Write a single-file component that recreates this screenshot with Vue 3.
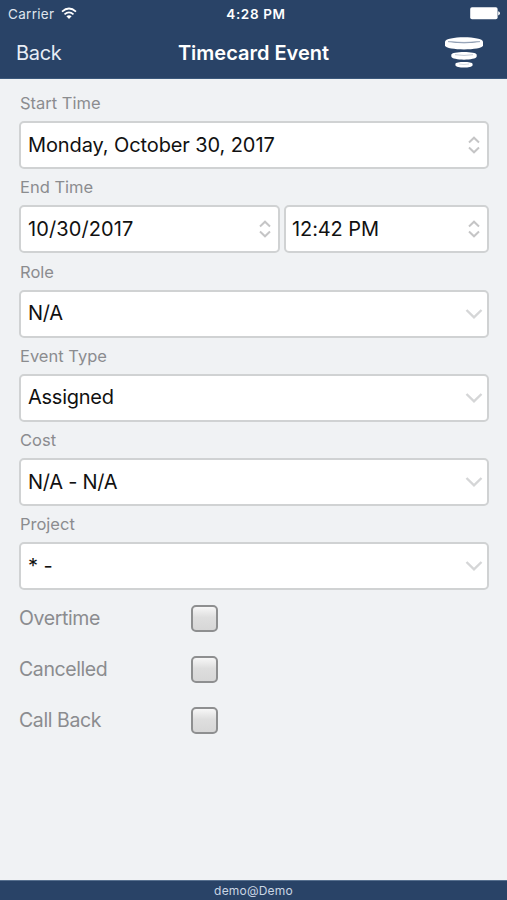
<script setup>
const groups = [
  { label: 'Start Time', fields: [{ value: 'Monday, October 30, 2017', kind: 'stepper', cls: 'date-long' }] },
  {
    label: 'End Time',
    fields: [
      { value: '10/30/2017', kind: 'stepper', cls: 'date' },
      { value: '12:42 PM', kind: 'stepper', cls: 'time' },
    ],
  },
  { label: 'Role', fields: [{ value: 'N/A', kind: 'select', cls: 'tight' }] },
  { label: 'Event Type', fields: [{ value: 'Assigned', kind: 'select', cls: 'tight' }] },
  { label: 'Cost', fields: [{ value: 'N/A - N/A', kind: 'select', cls: 'tight' }] },
  { label: 'Project', fields: [{ value: '* -', kind: 'select' }] },
]
const checks = ['Overtime', 'Cancelled', 'Call Back']
</script>

<template>
  <div class="screen">
    <header class="top">
      <div class="status">
        <div class="carrier">
          <span>Carrier</span>
          <svg width="16" height="13" viewBox="0 0 16 13">
            <g fill="none" stroke="#fff" stroke-width="1.7">
              <path d="M1 4.7 Q8 -1.7 15 4.7" />
              <path d="M3.5 7.4 Q8 3.3 12.5 7.4" />
            </g>
            <path d="M5.4 9.3 Q8 7.2 10.6 9.3 L8 12 Z" fill="#fff" />
          </svg>
        </div>
        <span class="clock">4:28 PM</span>
        <svg class="battery" width="30" height="13" viewBox="0 0 30 13">
          <rect x="0.2" y="0.3" width="27.4" height="12" rx="1.8" fill="#fff" />
          <path d="M28.2 4.2 Q30 4.8 30 6.3 Q30 7.8 28.2 8.4 Z" fill="#fff" />
        </svg>
      </div>
      <nav class="nav">
        <span class="back">Back</span>
        <h1>Timecard Event</h1>
        <svg class="logo" width="38" height="31" viewBox="0 0 38 31">
          <path d="M0 4.8 C0 -1.2 38 -1.2 38 4.8 V8.6 C37 13.8 1 13.8 0 8.6 Z" fill="#fff" />
          <path d="M3 4.6 Q19 7.6 35 4.6 Q19 6.2 3 4.6 Z" fill="#8293aa" stroke="#8293aa" stroke-width=".5" />
          <path d="M6.3 17.8 C6.3 14 31.7 14 31.7 17.8 V19.6 C31 23.8 7 23.8 6.3 19.6 Z" fill="#fff" />
          <path d="M10 17.7 Q19 19.2 28 17.7" fill="none" stroke="#b3bdca" stroke-width=".8" />
          <path d="M10.4 27 C10.4 24.4 27.6 24.4 27.6 27 V28.2 C27 31.4 11 31.4 10.4 28.2 Z" fill="#fff" />
          <path d="M14 27 Q19 28 24 27" fill="none" stroke="#c0c8d2" stroke-width=".7" />
        </svg>
      </nav>
    </header>

    <main>
      <section v-for="g in groups" :key="g.label" class="group">
        <label>{{ g.label }}</label>
        <div class="row">
          <div v-for="f in g.fields" :key="f.value" class="field" :class="f.cls">
            <span>{{ f.value }}</span>
            <svg v-if="f.kind === 'stepper'" class="stepper" width="12" height="18" viewBox="0 0 12 18">
              <path d="M1 6.4 L6 1.7 L11 6.4 M1 11.6 L6 16.3 L11 11.6" />
            </svg>
            <svg v-else class="chevron" width="18" height="12" viewBox="0 0 18 12">
              <path d="M1.5 2 L9 9.3 L16.5 2" />
            </svg>
          </div>
        </div>
      </section>
      <div class="checks">
        <div v-for="c in checks" :key="c" class="check">
          <span>{{ c }}</span>
          <i class="box"></i>
        </div>
      </div>
    </main>

    <footer>demo@Demo</footer>
  </div>
</template>

<style>
body {
  margin: 0;
  background: #f0f2f4;
}
</style>

<style scoped>
.screen {
  width: 507px;
  height: 900px;
  display: flex;
  flex-direction: column;
  background: #f0f2f4;
  font-family: Inter, Roboto, sans-serif;
  overflow: hidden;
}
.top {
  height: 79px;
  box-sizing: border-box;
  background: #294367;
  border-bottom: 1px solid #3b587b;
  color: #fff;
}
.status {
  height: 27px;
  display: grid;
  grid-template-columns: 1fr auto 1fr;
  align-items: center;
  padding: 0 7px 0 12px;
  font-size: 13.5px;
}
.carrier {
  display: flex;
  align-items: center;
  gap: 7px;
  margin-left: -4px;
  color: #dfe5ed;
  letter-spacing: 0.3px;
}
.clock {
  font-weight: 600;
  font-size: 13.5px;
  letter-spacing: 0.65px;
}
.battery {
  justify-self: end;
}
.nav {
  height: 51px;
  display: grid;
  grid-template-columns: 1fr auto 1fr;
  align-items: center;
  padding: 0 16px;
}
.back {
  font-size: 20px;
  letter-spacing: -0.3px;
  color: #e7edf5;
}
h1 {
  margin: 0;
  font-size: 20px;
  font-weight: 600;
}
.logo {
  justify-self: end;
  margin: -1px 8px 0 0;
}
main {
  flex: 1;
  padding: 6px 18px 0 19px;
}
.group {
  height: 84.25px;
}
label {
  display: block;
  height: 36px;
  padding-left: 1px;
  line-height: 36px;
  font-size: 16.5px;
  color: #8b8c8f;
}
.row {
  display: flex;
  gap: 4px;
}
.field {
  flex: 1;
  height: 48px;
  box-sizing: border-box;
  border: 2px solid #d0d2d3;
  border-radius: 5px;
  background: #fff;
  display: flex;
  align-items: center;
  justify-content: space-between;
  padding: 0 6px 1px 7px;
  font-size: 20px;
  letter-spacing: -0.1px;
  color: #111;
  white-space: pre;
}
.date {
  flex: 0 0 261px;
  letter-spacing: 0.1px;
}
.time {
  padding-left: 6px;
}
.tight {
  letter-spacing: -0.25px;
}
.stepper {
  margin: 1px 1px 0 0;
}
.stepper path {
  fill: none;
  stroke: #c5c5c6;
  stroke-width: 2;
}
.chevron {
  margin: 1px -2px 0 0;
}
.chevron path {
  fill: none;
  stroke: #d5d6d7;
  stroke-width: 2.4;
}
.checks {
  padding-top: 1px;
}
.check {
  height: 51.3px;
  display: flex;
  align-items: flex-start;
  font-size: 19.5px;
  letter-spacing: -0.4px;
  line-height: 52px;
  color: #8b8c8f;
}
.check span {
  width: 172px;
}
.box {
  width: 27px;
  height: 27px;
  margin-top: 13px;
  box-sizing: border-box;
  border: 2px solid #8e8f90;
  border-radius: 5px;
  background: linear-gradient(#f7f7f7, #dedede 45%, #d7d7d7);
}
footer {
  height: 20px;
  box-sizing: border-box;
  border-top: 1px solid #57708f;
  background: #294367;
  color: #c9d6e4;
  font-size: 12px;
  line-height: 19px;
  text-align: center;
  letter-spacing: 0.2px;
}
</style>
